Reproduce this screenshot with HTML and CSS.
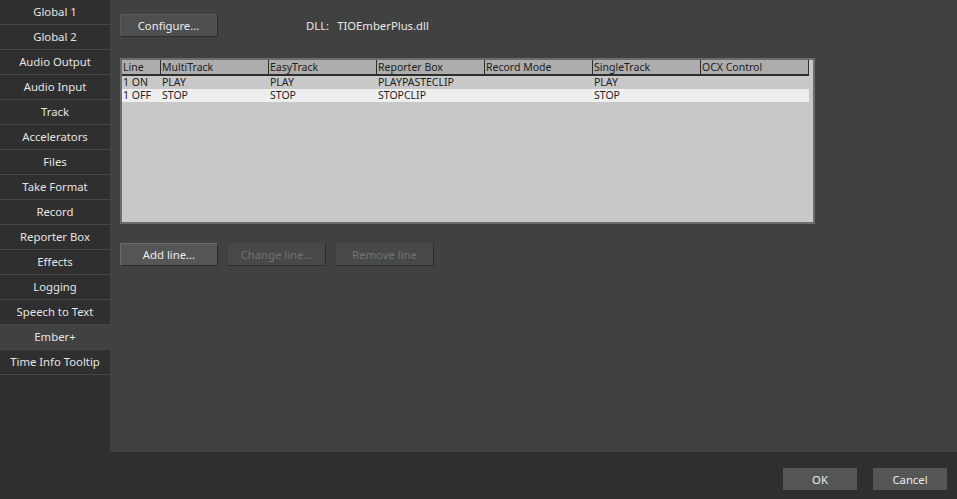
FILE: index.html
```html
<!DOCTYPE html>
<html>
<head>
    <title>Settings - Ember+</title>
    <link rel="stylesheet" href="styles.css">
</head>
<body>
    <div class="window">
        <div class="main">
            <div class="sidebar">
                <div class="nav-item">Global 1</div>
                <div class="nav-item">Global 2</div>
                <div class="nav-item">Audio Output</div>
                <div class="nav-item">Audio Input</div>
                <div class="nav-item">Track</div>
                <div class="nav-item">Accelerators</div>
                <div class="nav-item">Files</div>
                <div class="nav-item">Take Format</div>
                <div class="nav-item">Record</div>
                <div class="nav-item">Reporter Box</div>
                <div class="nav-item">Effects</div>
                <div class="nav-item">Logging</div>
                <div class="nav-item">Speech to Text</div>
                <div class="nav-item active">Ember+</div>
                <div class="nav-item">Time Info Tooltip</div>
            </div>

            <div class="content">
                <div class="top-row">
                    <button class="btn">Configure...</button>
                    <div class="dll"><span class="dll-label">DLL:</span>TIOEmberPlus.dll</div>
                </div>

                <div class="grid">
                    <div class="grid-head">
                        <div class="col c-line">Line</div>
                        <div class="col">MultiTrack</div>
                        <div class="col">EasyTrack</div>
                        <div class="col">Reporter Box</div>
                        <div class="col">Record Mode</div>
                        <div class="col">SingleTrack</div>
                        <div class="col">OCX Control</div>
                    </div>
                    <div class="grid-row">
                        <div class="col c-line">1 ON</div>
                        <div class="col">PLAY</div>
                        <div class="col">PLAY</div>
                        <div class="col">PLAYPASTECLIP</div>
                        <div class="col"></div>
                        <div class="col">PLAY</div>
                        <div class="col"></div>
                    </div>
                    <div class="grid-row selected">
                        <div class="col c-line">1 OFF</div>
                        <div class="col">STOP</div>
                        <div class="col">STOP</div>
                        <div class="col">STOPCLIP</div>
                        <div class="col"></div>
                        <div class="col">STOP</div>
                        <div class="col"></div>
                    </div>
                </div>

                <div class="line-buttons">
                    <button class="btn btn-focus">Add line...</button>
                    <button class="btn" disabled>Change line...</button>
                    <button class="btn" disabled>Remove line</button>
                </div>
            </div>
        </div>

        <div class="footer">
            <button class="btn btn-dialog">OK</button>
            <button class="btn btn-dialog">Cancel</button>
        </div>
    </div>
</body>
</html>
```

FILE: styles.css
```css
body {
    margin: 0;
    background: #2f2f2f;
    font-family: "Noto Sans", "Open Sans", sans-serif;
    font-size: 11.3px;
    color: #e6e6e6;
}
.window {
    width: 957px;
    height: 499px;
    display: flex;
    flex-direction: column;
    overflow: hidden;
}
.main {
    display: flex;
    height: 452px;
}
.sidebar {
    width: 110px;
    background: #2f2f2f;
}
.nav-item {
    height: 24px;
    line-height: 24px;
    border-bottom: 1px solid #464646;
    text-align: center;
    color: #e4e4e4;
}
.nav-item.active {
    background: #404241;
}
.content {
    flex: 1;
    background: #404241;
    padding: 14px 0 0 10px;
}
.top-row {
    display: flex;
    align-items: center;
}
.btn {
    width: 98px;
    height: 23px;
    padding: 0;
    background: #4e4f4f;
    color: #ececec;
    font-family: inherit;
    font-size: 11.3px;
    border: none;
    border-right: 1px solid #2c2c2c;
    border-bottom: 1px solid #2c2c2c;
    box-shadow: inset 1px 1px 0 #5a5a5a;
    cursor: pointer;
}
.btn:disabled {
    background: #474848;
    color: #727272;
    box-shadow: none;
    cursor: default;
}
.btn-focus {
    background: #555656;
    border: 1px solid #2c2c2c;
    border-top-color: #6a6a6a;
    border-left-color: #6a6a6a;
    box-shadow: none;
}
.dll {
    margin-left: 88px;
    color: #e8e8e8;
}
.dll-label {
    margin-right: 8px;
}
.grid {
    margin-top: 21px;
    width: 691px;
    height: 162px;
    background: #c8c8c8;
    border: 2px solid #6c6c6c;
    font-size: 10.5px;
    color: #1e1e1e;
}
.grid-head {
    display: flex;
    width: 686px;
    height: 14px;
    background: #adadad;
    border: 1px solid #2e2e2e;
    border-width: 0 1px 2px 0;
    line-height: 14px;
}
.grid-head .col {
    border-left: 1px solid #2e2e2e;
}
.grid-head .col.c-line {
    border-left: none;
}
.col {
    width: 108px;
    box-sizing: border-box;
    padding-left: 1px;
    white-space: nowrap;
    overflow: hidden;
}
.col.c-line {
    width: 38px;
}
.grid-row {
    display: flex;
    width: 687px;
    height: 13px;
    line-height: 13px;
}
.grid-row .col {
    padding-left: 2px;
}
.grid-row .col.c-line {
    padding-left: 1px;
}
.grid-row.selected {
    background: #eeeeee;
}
.line-buttons {
    display: flex;
    gap: 10px;
    margin-top: 19px;
}
.footer {
    flex: 1;
    display: flex;
    justify-content: flex-end;
    align-items: flex-start;
    gap: 16px;
    padding: 16px 10px 0 0;
    background: #2f2f2f;
}
.btn-dialog {
    width: 74px;
    height: 22px;
    background: #545555;
    border: none;
    box-shadow: none;
}
```
